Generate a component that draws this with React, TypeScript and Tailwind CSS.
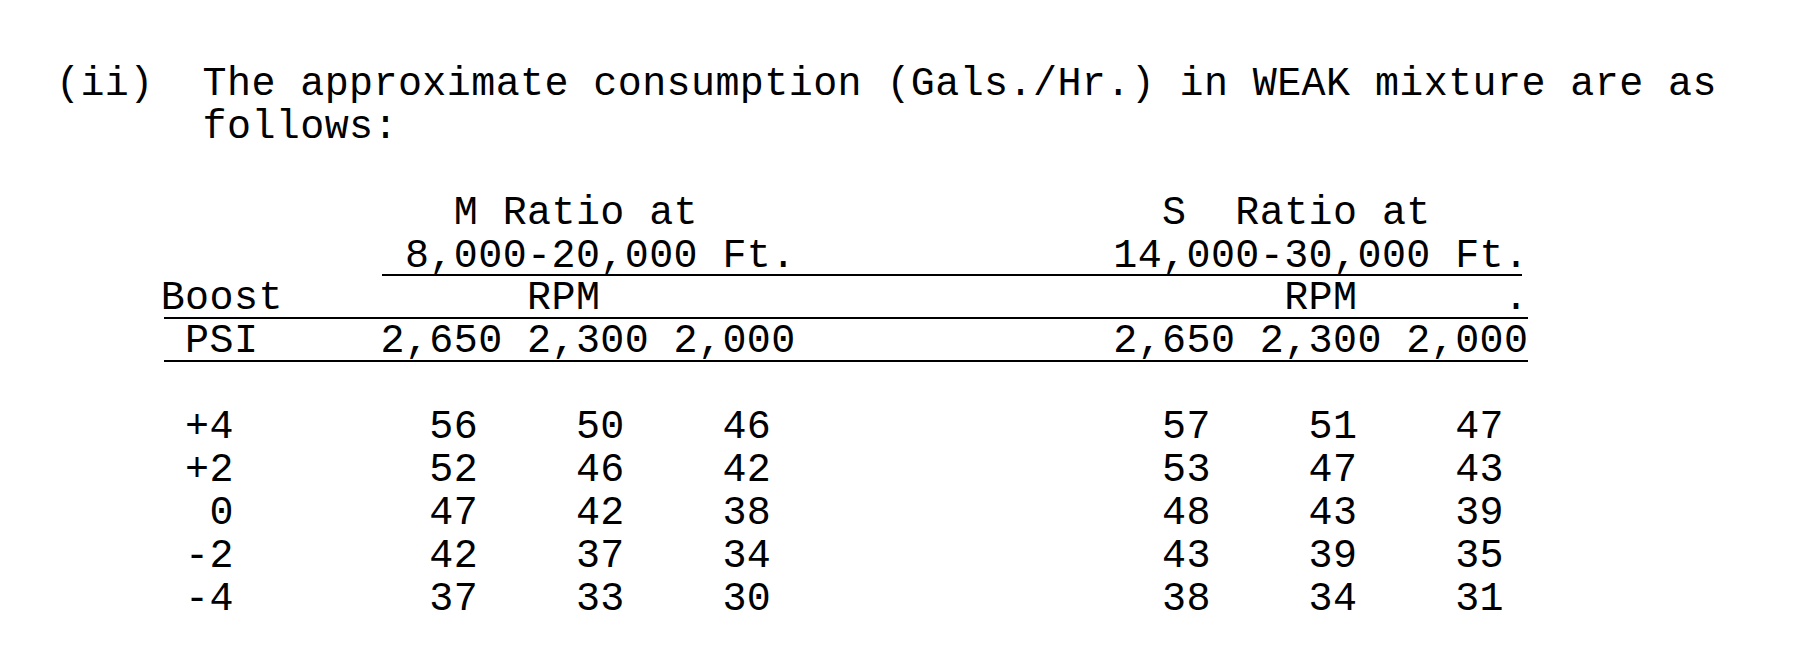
// typed table, laid out on a fixed character grid
function line(parts: [number, string][]) {
  let s = "";
  for (const [col, text] of parts) {
    while (s.length < col) s += " ";
    s += text;
  }
  return s;
}

const rows = [
  ["+4", "56", "50", "46", "57", "51", "47"],
  ["+2", "52", "46", "42", "53", "47", "43"],
  [" 0", "47", "42", "38", "48", "43", "39"],
  ["-2", "42", "37", "34", "43", "39", "35"],
  ["-4", "37", "33", "30", "38", "34", "31"],
];

function Row({ text, head }: { text: string; head?: boolean }) {
  return (
    <div className={head ? "h-[42.9px] whitespace-pre pl-[56px]" : "h-[42.9px] whitespace-pre pl-[63px]"}>
      {text}
    </div>
  );
}

function Rule({ wide }: { wide?: boolean }) {
  return wide ? (
    <div className="-mt-[4px] mb-[2.5px] ml-[164px] h-[1.5px] w-[1364px] bg-black" />
  ) : (
    <div className="-mt-[4px] mb-[2.5px] ml-[382px] h-[1.5px] w-[1140px] bg-black" />
  );
}

export default function App() {
  return (
    <div className="w-[1802px] h-[652px] bg-white text-black pt-[64px] font-['Liberation_Mono','Courier_New',monospace] text-[40px] leading-[42.9px] tracking-[0.42px]">
      <Row head text="(ii)  The approximate consumption (Gals./Hr.) in WEAK mixture are as" />
      <Row head text="      follows:" />
      <Row text="" />
      <Row text={line([[16, "M Ratio at"], [45, "S  Ratio at"]])} />
      <Row text={line([[14, "8,000-20,000 Ft."], [43, "14,000-30,000 Ft."]])} />
      <Rule />
      <Row text={line([[4, "Boost"], [19, "RPM"], [50, "RPM"], [59, "."]])} />
      <Rule wide />
      <Row text={line([[5, "PSI"], [13, "2,650 2,300 2,000"], [43, "2,650 2,300 2,000"]])} />
      <Rule wide />
      <Row text="" />
      {rows.map((r) => (
        <Row
          key={r[0]}
          text={line([[5, r[0]], [15, r[1]], [21, r[2]], [27, r[3]], [45, r[4]], [51, r[5]], [57, r[6]]])}
        />
      ))}
    </div>
  );
}
